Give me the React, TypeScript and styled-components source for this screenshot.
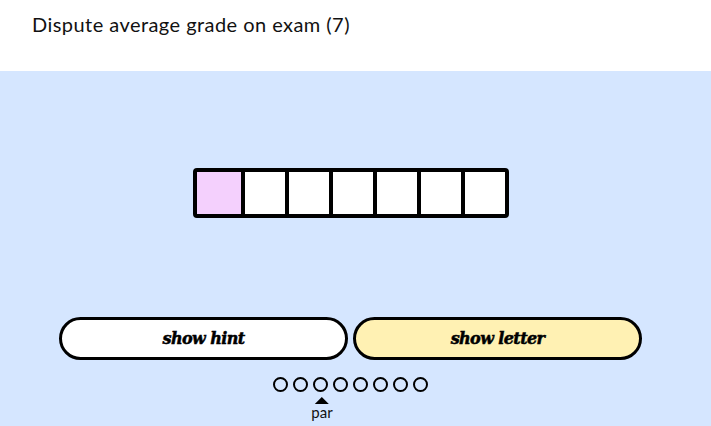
import React from "react";
import styled, { createGlobalStyle } from "styled-components";

const Global = createGlobalStyle`
  html, body { margin: 0; padding: 0; background: #d5e6ff; }
  body { font-family: "Lato", "Open Sans", sans-serif; }
`;

const Page = styled.div`
  display: flex;
  flex-direction: column;
  min-height: 426px;
`;

const Header = styled.header`
  background: #ffffff;
  height: 71px;
  box-sizing: border-box;
  padding: 12px 0 0 32px;
  font-family: "Lato", "Open Sans", sans-serif;
  font-size: 20px;
  color: #111;
  letter-spacing: 0.45px;
`;

const Main = styled.main`
  flex: 1;
  background: #d5e6ff;
  display: flex;
  flex-direction: column;
  align-items: center;
  padding: 97px 10px 0 0;
`;

const Grid = styled.div`
  display: flex;
  border: 4px solid #000;
  border-radius: 4px;
  background: #000;
  gap: 4px;
`;

const Cell = styled.div<{ $active?: boolean }>`
  width: ${(p) => (p.$active ? 44 : 40)}px;
  height: 42px;
  background: ${(p) => (p.$active ? "#f4d0fd" : "#ffffff")};
`;

const Buttons = styled.div`
  display: flex;
  gap: 5px;
  margin-top: 99px;
`;

const Btn = styled.button<{ $yellow?: boolean }>`
  width: 289px;
  height: 43px;
  box-sizing: border-box;
  border: 3.5px solid #000;
  border-radius: 22px;
  background: ${(p) => (p.$yellow ? "#fff1b3" : "#ffffff")};
  font-family: "DejaVu Serif", serif;
  font-weight: 900;
  font-style: italic;
  font-size: 16px;
  letter-spacing: -0.6px;
  -webkit-text-stroke: 0.5px #000;
  color: #000;
  padding: 0;
  cursor: pointer;
`;

const Dots = styled.div`
  display: flex;
  gap: 5px;
  margin-top: 17px;
`;

const DotCol = styled.div`
  position: relative;
  width: 15px;
  height: 15px;
`;

const Dot = styled.div`
  width: 15px;
  height: 15px;
  box-sizing: border-box;
  border: 2px solid #000;
  border-radius: 50%;
`;

const Marker = styled.div`
  position: absolute;
  top: 20px;
  left: 50%;
  transform: translateX(-50%);
  display: flex;
  flex-direction: column;
  align-items: center;
`;

const Triangle = styled.div`
  width: 0;
  height: 0;
  border-left: 7.5px solid transparent;
  border-right: 7.5px solid transparent;
  border-bottom: 7px solid #000;
  margin-left: 3px;
`;

const Label = styled.div`
  font-family: "Lato", "Open Sans", sans-serif;
  font-size: 15px;
  line-height: 15px;
  color: #111;
  margin-top: 1px;
  margin-left: 3px;
`;

export default function App() {
  const cells = Array.from({ length: 7 });
  const dots = Array.from({ length: 8 });
  return (
    <Page>
      <Global />
      <Header>Dispute average grade on exam (7)</Header>
      <Main>
        <Grid>
          {cells.map((_, i) => (
            <Cell key={i} $active={i === 0} />
          ))}
        </Grid>
        <Buttons>
          <Btn>show hint</Btn>
          <Btn $yellow>show letter</Btn>
        </Buttons>
        <Dots>
          {dots.map((_, i) => (
            <DotCol key={i}>
              <Dot />
              {i === 2 && (
                <Marker>
                  <Triangle />
                  <Label>par</Label>
                </Marker>
              )}
            </DotCol>
          ))}
        </Dots>
      </Main>
    </Page>
  );
}
